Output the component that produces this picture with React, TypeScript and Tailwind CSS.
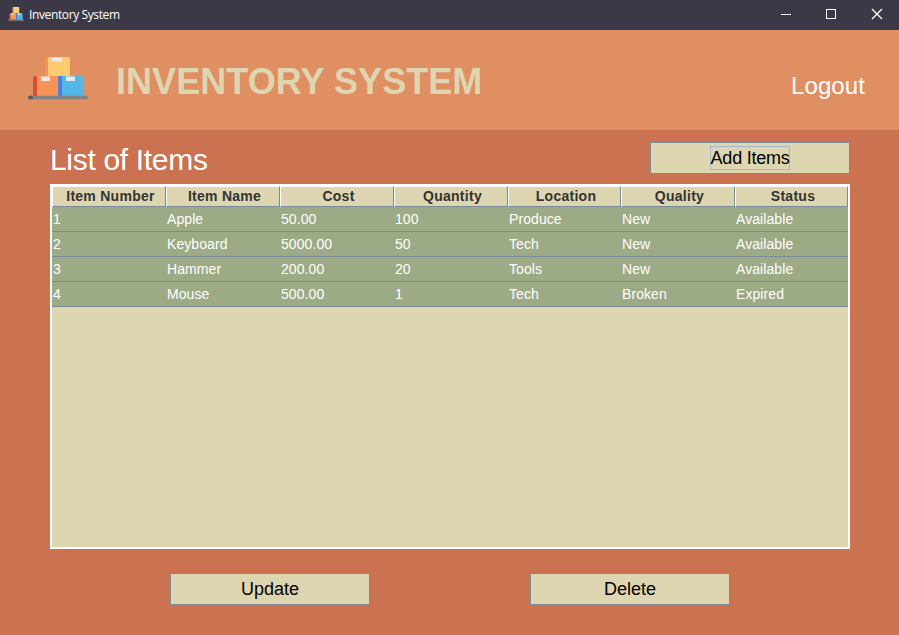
import React from "react";

const columns = ["Item Number", "Item Name", "Cost", "Quantity", "Location", "Quality", "Status"];

const items = [
  ["1", "Apple", "50.00", "100", "Produce", "New", "Available"],
  ["2", "Keyboard", "5000.00", "50", "Tech", "New", "Available"],
  ["3", "Hammer", "200.00", "20", "Tools", "New", "Available"],
  ["4", "Mouse", "500.00", "1", "Tech", "Broken", "Expired"],
];

const grid = "grid grid-cols-[114px_114px_114px_114px_113px_114px_113px]";

function BoxesLogo({ className }: { className: string }) {
  return (
    <svg viewBox="0 0 60 43" preserveAspectRatio="none" className={className}>
      <rect x="17" y="0" width="4" height="20" fill="#f79455" />
      <path d="M20 0h20q2 0 2 2v18H20z" fill="#ffcb70" />
      <rect x="24" y="0.5" width="10" height="4" fill="#e9e9ea" />
      <path d="M7 19h-1q-1 0-1 2v18h5V19z" fill="#d84f36" />
      <rect x="9" y="19" width="21" height="20" fill="#f79455" />
      <rect x="13" y="19.5" width="9" height="4.5" fill="#e9e9ea" />
      <rect x="30" y="19" width="5" height="20" fill="#4c7fd6" />
      <path d="M34 19h19q2 0 2 2v18H34z" fill="#55b7e8" />
      <rect x="38" y="19.5" width="9" height="4.5" fill="#e9e9ea" />
      <rect x="0" y="38.7" width="60" height="3.6" rx="1.6" fill="#848383" />
      <rect x="0" y="38.7" width="5" height="3.6" rx="1.6" fill="#5c5b5b" />
    </svg>
  );
}

function ActionButton({ label, focused }: { label: string; focused?: boolean }) {
  return (
    <button className="flex h-8 w-[200px] items-center justify-center border border-[#7a8a99] bg-[#ded6b0] text-lg text-black">
      <span
        className={
          focused
            ? "flex h-6 w-20 items-center justify-center whitespace-nowrap border border-[#a3b8cc] tracking-[-0.25px]"
            : ""
        }
      >
        {label}
      </span>
    </button>
  );
}

export default function App() {
  return (
    <div className="flex h-[635px] w-[899px] flex-col overflow-hidden bg-[#cb7351] font-['Liberation_Sans',Arial,sans-serif]">
      <div className="flex h-[30px] items-center bg-[#3b3947] pl-2 text-white">
        <BoxesLogo className="mt-[-2px] h-[14px] w-4" />
        <span className="ml-[5px] font-['Open_Sans','Noto_Sans',sans-serif] text-[12px] tracking-[-0.38px]">Inventory System</span>
        <svg className="ml-auto h-[30px] w-[138px]" viewBox="0 0 138 30" fill="none" stroke="white" shapeRendering="crispEdges">
          <path d="M20 14.5h10" />
          <rect x="65.5" y="9.5" width="9" height="9" />
          <path d="M111 9l10 10M121 9l-10 10" strokeWidth="1.3" shapeRendering="auto" />
        </svg>
      </div>

      <header className="flex h-[100px] items-center bg-[#e08f62] pl-7 pr-[34px]">
        <BoxesLogo className="mt-[-3px] h-[43px] w-[60px]" />
        <h1 className="ml-7 mt-[3px] whitespace-nowrap text-[36px] font-bold leading-none tracking-[0.06px] text-[#ded6b0]">INVENTORY SYSTEM</h1>
        <button className="ml-auto mt-3 text-2xl leading-none tracking-[0.1px] text-white">Logout</button>
      </header>

      <main className="flex flex-col px-[50px] pt-3">
        <div className="flex h-[42px] w-[800px] items-start justify-between">
          <h2 className="mt-[3px] text-[30px] leading-none tracking-[-0.32px] text-white">List of Items</h2>
          <ActionButton label="Add Items" focused />
        </div>

        <div className="h-[365px] w-[800px] border-2 border-white bg-[#ded6b0] text-[14px]">
          <div className={grid}>
            {columns.map((name) => (
              <div key={name} className="flex h-[21px] items-center justify-center border border-b-[#7a8a99] border-l-white border-r-[#7a8a99] border-t-white pb-0.5 pl-[3px] font-bold leading-none tracking-[0.27px] text-[#333333]">
                {name}
              </div>
            ))}
          </div>
          {items.map((row) => (
            <div key={row[0]} className={`${grid} h-[25px] border-b border-[#7a8a99] bg-[#9daa86] text-white`}>
              {row.map((value, i) => (
                <div key={i} className="pl-px leading-6 tracking-[0.08px]">{value}</div>
              ))}
            </div>
          ))}
        </div>

        <div className="mt-6 flex gap-[160px] pl-[120px]">
          <ActionButton label="Update" />
          <ActionButton label="Delete" />
        </div>
      </main>
    </div>
  );
}
